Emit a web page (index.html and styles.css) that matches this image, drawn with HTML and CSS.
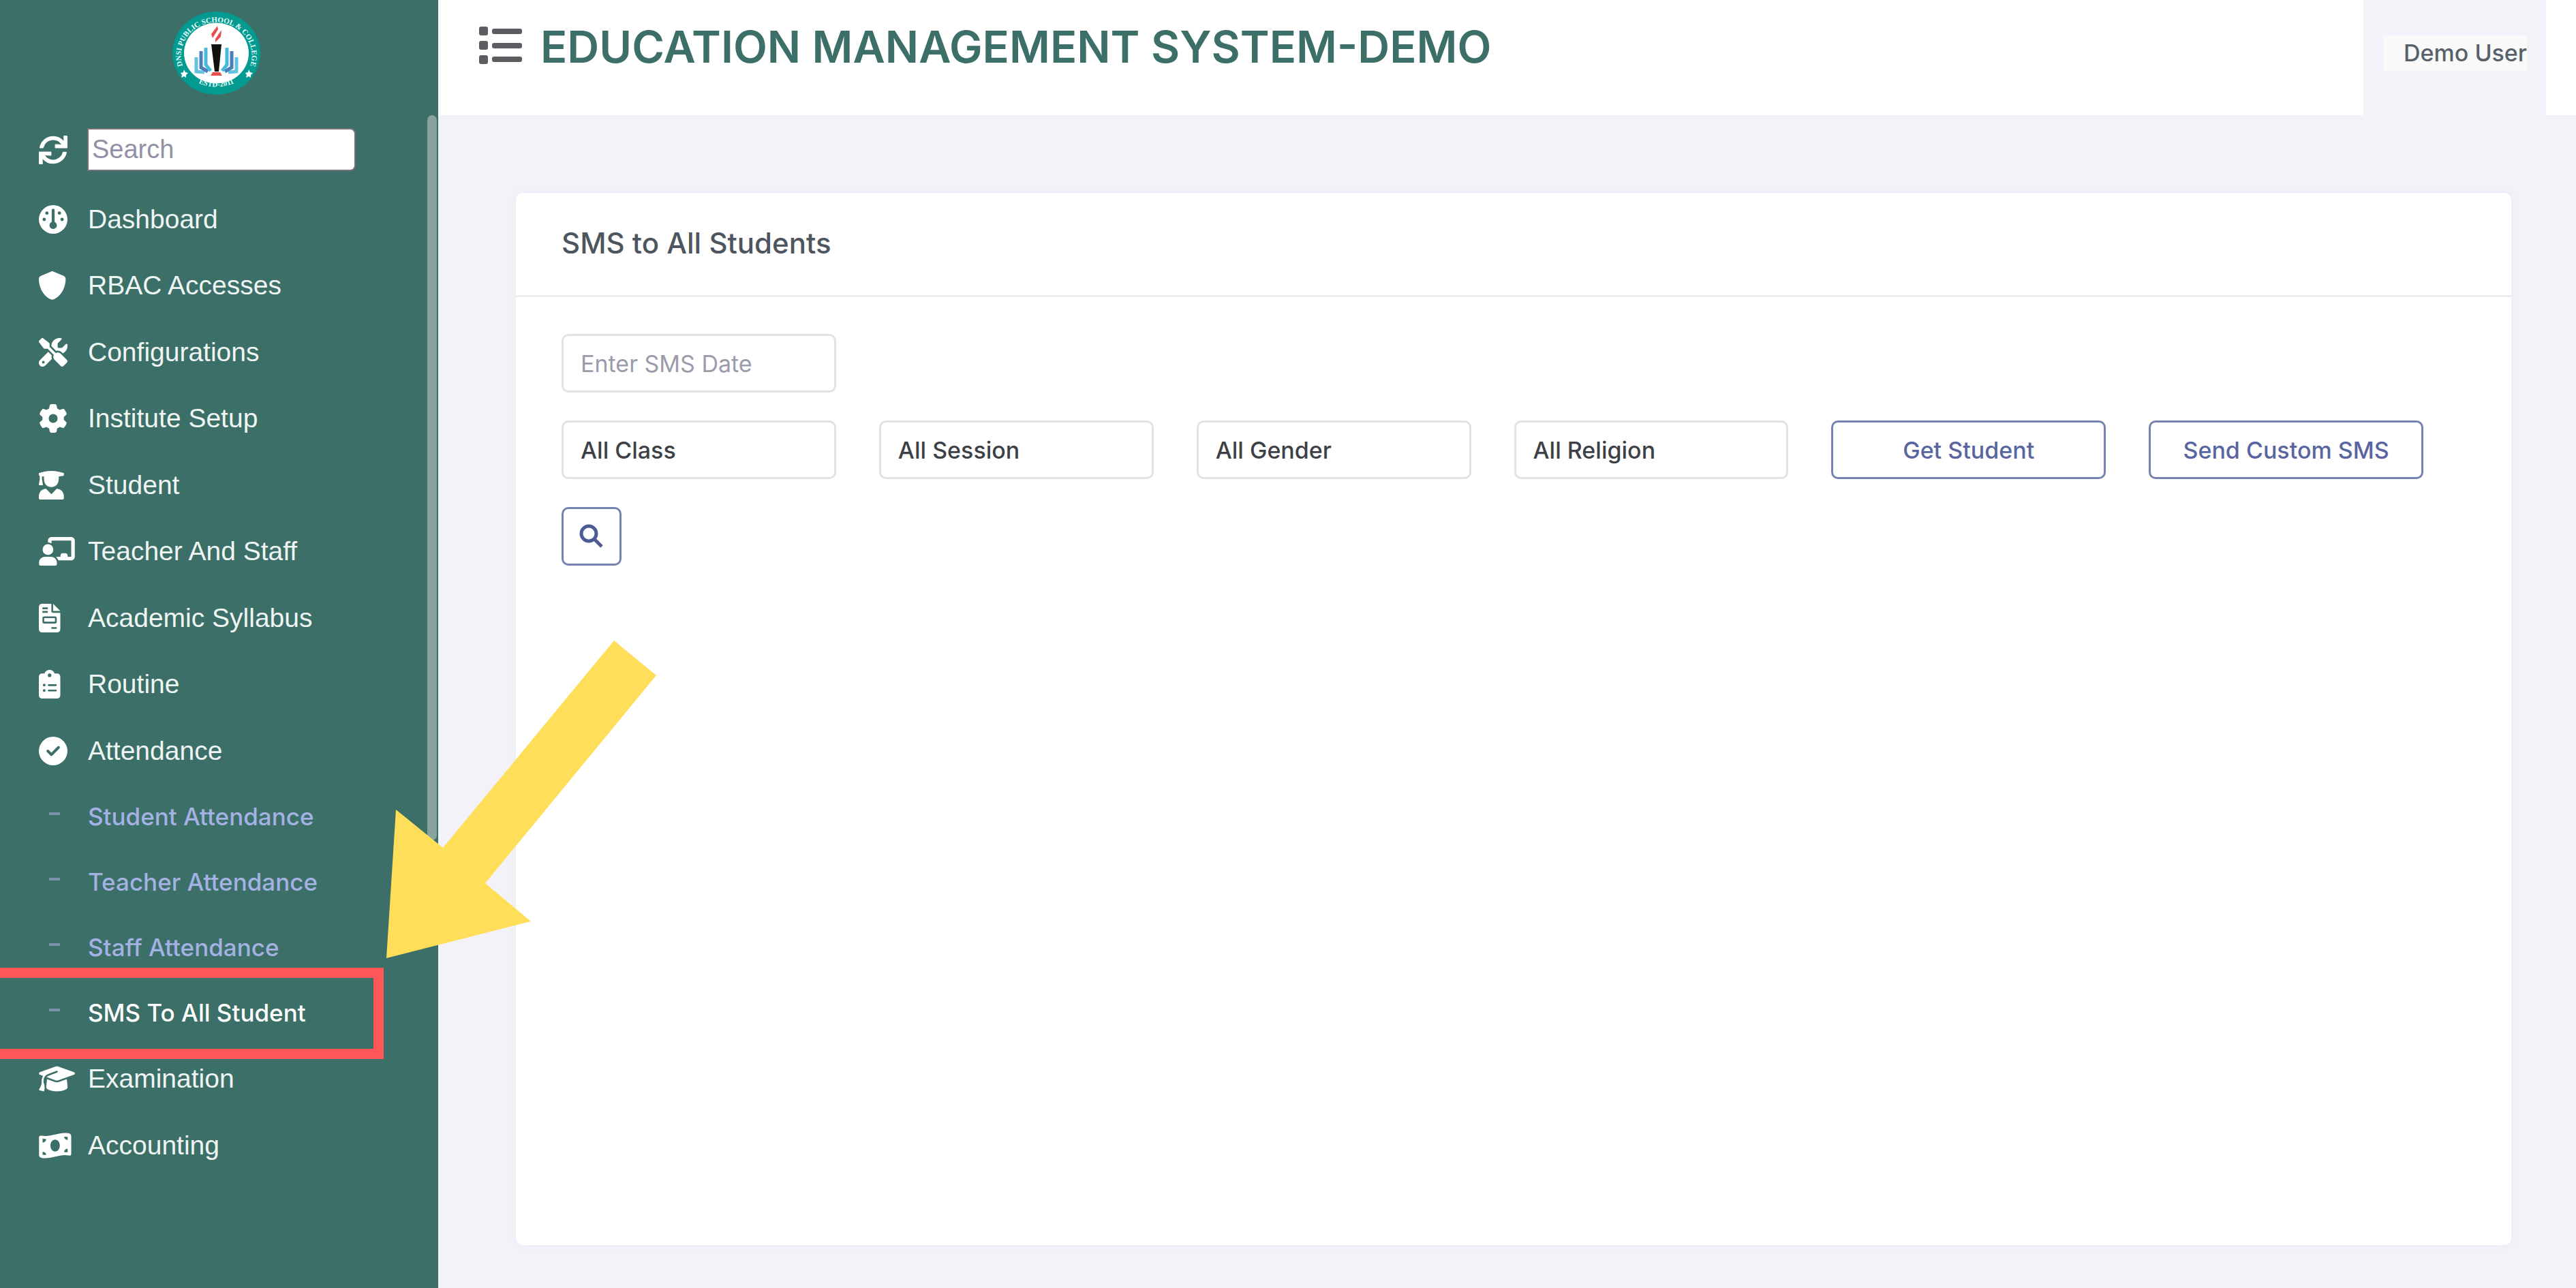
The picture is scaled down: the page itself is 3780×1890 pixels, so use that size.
FILE: index.html
```html
<!DOCTYPE html>
<html lang="en">
<head>
<meta charset="utf-8">
<title>SMS to All Students</title>
<link rel="stylesheet" href="styles.css">
</head>
<body>
<div class="layout">
  <aside class="sidebar">
    <div class="brand">
      <svg class="logo" viewBox="0 0 129 122" aria-label="School logo">
        <ellipse cx="64.500" cy="61" rx="64.500" ry="61" fill="#039a91"/>
        <ellipse cx="64.500" cy="61" rx="47.500" ry="44.500" fill="#fff"/>
        <path id="ring-top" d="M14.500 78A52 49 0 1 1 114.500 78" fill="none"/>
        <path id="ring-bottom" d="M20 92A60 56 0 0 0 109 92" fill="none"/>
        <text class="ring-text"><textPath href="#ring-top" startOffset="50%" text-anchor="middle">DNSI PUBLIC SCHOOL &amp; COLLEGE</textPath></text>
        <text class="ring-text"><textPath href="#ring-bottom" startOffset="50%" text-anchor="middle">ESTD-2011</textPath></text>
        <path d="M17 85l2 4 4 1-3 3v4l-3-2-4 2 1-4-2-3 4-1zM112 85l2 4 4 1-3 3v4l-3-2-4 2 1-4-2-3 4-1z" fill="#fff"/>
        <path d="M66 21L57 33l2 6 8-13zM72 27l-9 13v5l8-8z" fill="#ec4f4b"/>
        <path d="M57 48h15l-4 40h-6z" fill="#111"/>
        <path d="M59 89h11l3 5H56z" fill="#ec4f4b"/>
        <g fill="none" stroke-width="5">
          <path d="M35 67v21l12 1M94 67v21l-12 1" stroke="#62c4e0"/>
          <path d="M42 58v24l10 6M87 58v24l-10 6" stroke="#4c7fb8"/>
          <path d="M49 53v25l7 9M80 53v25l-7 9" stroke="#46b9dc"/>
        </g>
      </svg>
    </div>
    <div class="side-search">
      <button class="refresh" type="button" aria-label="Refresh">
        <svg class="icon" viewBox="0 0 512 512"><path d="M440.650 12.570l4 82.770A247.160 247.160 0 0 0 255.830 8C134.730 8 33.910 94.920 12.290 209.820A12 12 0 0 0 24.090 224h49.050a12 12 0 0 0 11.670-9.260 175.910 175.910 0 0 1 317-56.940l-101.460-4.860a12 12 0 0 0-12.570 12v47.410a12 12 0 0 0 12 12H500a12 12 0 0 0 12-12V12a12 12 0 0 0-12-12h-47.370a12 12 0 0 0-11.980 12.570zM255.830 432a175.610 175.610 0 0 1-146-77.800l101.800 4.870a12 12 0 0 0 12.570-12v-47.400a12 12 0 0 0-12-12H12a12 12 0 0 0-12 12V500a12 12 0 0 0 12 12h47.350a12 12 0 0 0 12-12.600l-4.150-82.570A247.170 247.170 0 0 0 255.830 504c121.110 0 221.930-86.920 243.550-201.820a12 12 0 0 0-11.800-14.180h-49.050a12 12 0 0 0-11.670 9.260A175.860 175.860 0 0 1 255.830 432z"/></svg>
      </button>
      <input class="search-input" type="text" placeholder="Search" aria-label="Search menu">
    </div>
    <nav>
      <ul class="menu">
        <li><a href="#"><svg class="icon" viewBox="0 0 512 512"><path fill-rule="evenodd" d="M256 0a256 256 0 1 0 0 512a256 256 0 1 0 0-512zM230 90a26 26 0 0 1 52 0v210a66 66 0 1 1-52 0zM144 112a30 30 0 1 0 0 60a30 30 0 1 0 0-60zM368 112a30 30 0 1 0 0 60a30 30 0 1 0 0-60zM96 226a30 30 0 1 0 0 60a30 30 0 1 0 0-60zM416 226a30 30 0 1 0 0 60a30 30 0 1 0 0-60z"/></svg><span>Dashboard</span></a></li>
        <li><a href="#"><svg class="icon" viewBox="16 0 512 512"><path d="M256 0c4.600 0 9.200 1 13.400 2.900L457.700 82.800c22 9.300 38.400 31 38.300 57.200c-.5 99.200-41.300 280.700-213.600 363.200c-16.700 8-36.100 8-52.800 0C57.300 420.700 16.500 239.200 16 140c-.1-26.200 16.300-47.900 38.300-57.200L242.700 2.900C246.800 1 251.400 0 256 0z"/></svg><span>RBAC Accesses</span></a></li>
        <li><a href="#"><svg class="icon" viewBox="0 0 512 512"><path fill-rule="evenodd" d="M78.600 5C69.100-2.400 55.600-1.500 47 7L7 47c-8.500 8.500-9.400 22-2.100 31.600l80 104c4.500 5.900 11.600 9.400 19 9.400h54.100l109 109c-14.700 29-10 65.400 14.300 89.600l112 112c12.500 12.500 32.800 12.500 45.300 0l64-64c12.500-12.500 12.500-32.800 0-45.300l-112-112c-24.200-24.200-60.600-29-89.600-14.300l-109-109V104c0-7.500-3.500-14.500-9.400-19L78.600 5zM19.900 396.100C7.200 408.800 0 426.100 0 444.100C0 481.600 30.400 512 67.900 512c18 0 35.300-7.200 48-19.900L233.700 374.300c-7.800-20.900-9-43.600-3.600-65.100l-61.700-61.700L19.900 396.100zM512 144c0-10.500-1.100-20.700-3.200-30.500c-2.400-11.200-16.100-14.100-24.200-6l-63.900 63.900c-3 3-7.100 4.700-11.300 4.700H352c-8.800 0-16-7.200-16-16V102.600c0-4.200 1.700-8.300 4.700-11.300l63.900-63.900c8.100-8.100 5.200-21.800-6-24.200C388.700 1.100 378.500 0 368 0C288.500 0 224 64.500 224 144l0 .8 85.300 85.300c36-9.100 75.800 .5 104 28.700L429 274.500c49-23 83-72.800 83-130.500zM56 432a24 24 0 1 1 48 0 24 24 0 1 1-48 0z"/></svg><span>Configurations</span></a></li>
        <li><a href="#"><svg class="icon" viewBox="0 0 512 512"><path fill-rule="evenodd" d="M495.900 166.600c3.200 8.700 .5 18.400-6.400 24.600l-43.300 39.400c1.100 8.300 1.700 16.800 1.700 25.400s-.6 17.100-1.700 25.400l43.300 39.400c6.900 6.200 9.600 15.900 6.400 24.600c-4.400 11.900-9.700 23.300-15.800 34.300l-4.700 8.100c-6.600 11-14 21.400-22.100 31.200c-5.900 7.200-15.700 9.600-24.500 6.800l-55.700-17.700c-13.400 10.300-28.200 18.900-44 25.400l-12.500 57.100c-2 9.100-9 16.300-18.200 17.800c-13.800 2.300-28 3.500-42.500 3.500s-28.700-1.200-42.500-3.500c-9.200-1.500-16.200-8.700-18.200-17.800l-12.500-57.100c-15.800-6.500-30.600-15.100-44-25.400L83.100 425.900c-8.800 2.800-18.600 .3-24.500-6.800c-8.100-9.800-15.500-20.200-22.100-31.200l-4.700-8.100c-6.100-11-11.400-22.400-15.800-34.300c-3.200-8.700-.5-18.400 6.400-24.600l43.300-39.400C64.600 273.100 64 264.600 64 256s.6-17.100 1.700-25.400L22.400 191.200c-6.900-6.200-9.600-15.900-6.400-24.600c4.400-11.900 9.700-23.300 15.800-34.300l4.700-8.100c6.600-11 14-21.400 22.100-31.200c5.900-7.200 15.700-9.600 24.500-6.800l55.700 17.700c13.400-10.300 28.200-18.900 44-25.400l12.500-57.100c2-9.100 9-16.300 18.200-17.800C227.300 1.200 241.500 0 256 0s28.700 1.200 42.500 3.500c9.200 1.500 16.200 8.700 18.200 17.800l12.500 57.100c15.800 6.500 30.600 15.100 44 25.400l55.700-17.700c8.800-2.800 18.600-.3 24.500 6.800c8.100 9.800 15.500 20.200 22.100 31.200l4.700 8.100c6.100 11 11.400 22.400 15.800 34.300zM256 336a80 80 0 1 0 0-160 80 80 0 1 0 0 160z"/></svg><span>Institute Setup</span></a></li>
        <li><a href="#"><svg class="icon" viewBox="0 0 512 512"><path d="M0 40C70 14 140 2 224 0c84 2 154 14 224 40v34q0 12-12 14l-80 14v42c0 96-60 146-132 146S92 240 92 144v-42l-36-6v52l16 96q2 12-10 12H12q-14 0-12-14l16-92V88Q0 84 0 70zM114 320c14-2 22 4 30 14l80 82 80-82c8-10 16-16 30-14c66 8 114 64 114 134v34q0 24-24 24H24q-24 0-24-24v-34c0-70 48-126 114-134z"/></svg><span>Student</span></a></li>
        <li><a href="#"><svg class="icon wide" viewBox="0 0 640 512"><path d="M160 128a96 96 0 1 0 0 192a96 96 0 1 0 0-192zM106 352h110c58 0 104 48 104 106v26q0 28-28 28H28q-28 0-28-28v-26c0-58 48-106 106-106zM160 64c0-36 28-64 64-64h352c36 0 64 28 64 64v288c0 36-28 64-64 64H346c-10-24-24-46-42-64h80v-24c0-22 18-40 40-40h48c22 0 40 18 40 40v24h64V64H224v50c-18-10-40-18-64-18z"/></svg><span>Teacher And Staff</span></a></li>
        <li><a href="#"><svg class="icon" viewBox="0 0 512 512"><path fill-rule="evenodd" d="M64 0h160v128q0 32 32 32h128v288q0 64-64 64H64q-64 0-64-64V64Q0 0 64 0zM256 0l128 128H256zM64 64v32h96V64zM64 128v32h96v-32zM96 224q-32 0-32 32v64q0 32 32 32h192q32 0 32-32v-64q0-32-32-32zM96 256h192v64H96zM224 416v32h96v-32z"/></svg><span>Academic Syllabus</span></a></li>
        <li><a href="#"><svg class="icon" viewBox="0 0 512 512"><path fill-rule="evenodd" d="M192 0c42 0 78 26 90 64h38q64 0 64 64v320q0 64-64 64H64q-64 0-64-64V128q0-64 64-64h38C114 26 150 0 192 0zM192 64a32 32 0 1 0 0 64a32 32 0 1 0 0-64zM96 248a24 24 0 1 0 0 48a24 24 0 1 0 0-48zM96 344a24 24 0 1 0 0 48a24 24 0 1 0 0-48zM176 256q-16 0-16 16t16 16h128q16 0 16-16t-16-16zM176 352q-16 0-16 16t16 16h128q16 0 16-16t-16-16z"/></svg><span>Routine</span></a></li>
        <li><a href="#"><svg class="icon" viewBox="0 0 512 512"><path fill-rule="evenodd" d="M256 512A256 256 0 1 0 256 0a256 256 0 1 0 0 512zM369 209L241 337c-9.400 9.400-24.600 9.400-33.900 0l-64-64c-9.400-9.400-9.400-24.600 0-33.900s24.600-9.400 33.900 0l47 47L335 175c9.400-9.400 24.600-9.400 33.900 0s9.400 24.600 0 33.900z"/></svg><span>Attendance</span></a>
          <ul class="submenu">
            <li><a href="#">Student Attendance</a></li>
            <li><a href="#">Teacher Attendance</a></li>
            <li><a href="#">Staff Attendance</a></li>
            <li class="current"><a href="#" aria-current="page">SMS To All Student</a></li>
          </ul>
        </li>
        <li><a href="#"><svg class="icon wide" viewBox="0 0 640 512"><path d="M320 32c-8.100 0-16.100 1.400-23.700 4.100L15.800 137.400C6.300 140.900 0 149.900 0 160s6.300 19.100 15.800 22.600l57.900 20.900C57.300 229.300 48 259.800 48 291.900v28.100c0 28.400-10.800 57.700-22.300 80.800c-6.500 13-13.900 25.800-22.500 37.600C0 442.700-.9 448.300 .9 453.400s6 8.900 11.200 10.200l64 16c4.200 1.100 8.700 .3 12.400-2s6.300-6.100 7.100-10.400c8.600-42.800 4.300-81.200-2.100-108.700C90.300 344.300 86 329.800 80 316.500V291.900c0-30.200 10.200-58.700 27.900-81.500c12.900-15.500 29.600-28 49.200-35.700l157-61.700c8.200-3.200 17.500 .8 20.700 9s-.8 17.500-9 20.700l-157 61.700c-12.400 4.900-23.300 12.400-32.200 21.600l159.600 57.600c7.600 2.700 15.600 4.100 23.700 4.100s16.100-1.400 23.700-4.100L624.200 182.600c9.500-3.400 15.800-12.500 15.800-22.600s-6.300-19.100-15.800-22.600L343.700 36.100C336.100 33.400 328.100 32 320 32zM128 408c0 35.300 86 72 192 72s192-36.700 192-72L496.700 262.600 354.500 314c-11.100 4-22.800 6-34.500 6s-23.500-2-34.500-6L143.300 262.600 128 408z"/></svg><span>Examination</span></a></li>
        <li><a href="#"><svg class="icon wide" viewBox="0 0 640 512"><path fill-rule="evenodd" d="M0 112q0-40 40-32C220 110 350 10 520 34q56 8 56 52v322q0 34-40 26C370 400 240 500 56 478Q0 470 0 426zM288 150c-48 0-84 48-84 106s36 106 84 106s84-48 84-106s-36-106-84-106zM64 132v72q60-8 64-64zM448 98q10 54 64 58v-54q-30-4-64-4zM64 370v50q30 4 66 2q-6-50-66-52zM512 312q-58 6-64 64q34-4 64 0z"/></svg><span>Accounting</span></a></li>
      </ul>
    </nav>
    <div class="scroll-thumb"></div>
  </aside>

  <div class="page">
    <header class="topbar">
      <button class="toggle" type="button" aria-label="Toggle menu">
        <svg class="toggle-icon" viewBox="0 0 63 55"><g fill="#5c5d60"><rect width="13" height="13" rx="3"/><rect y="21" width="13" height="13" rx="3"/><rect y="42" width="13" height="13" rx="3"/><rect x="19" y="3" width="44" height="8" rx="3"/><rect x="19" y="24" width="44" height="8" rx="3"/><rect x="19" y="44" width="44" height="8" rx="3"/></g></svg>
      </button>
      <h1 class="title">EDUCATION MANAGEMENT SYSTEM-DEMO</h1>
      <div class="user"><a class="user-name" href="#">Demo User</a></div>
    </header>
    <main class="content">
      <section class="card">
        <h2 class="card-title">SMS to All Students</h2>
        <form class="filters">
          <input class="control first" type="text" placeholder="Enter SMS Date" aria-label="SMS date">
          <select class="control" aria-label="Class"><option>All Class</option></select>
          <select class="control" aria-label="Session"><option>All Session</option></select>
          <select class="control" aria-label="Gender"><option>All Gender</option></select>
          <select class="control" aria-label="Religion"><option>All Religion</option></select>
          <button class="control action" type="button">Get Student</button>
          <button class="control action" type="button">Send Custom SMS</button>
          <button class="control action find" type="button" aria-label="Search">
            <svg class="find-icon" viewBox="0 0 36 36" fill="none" stroke="currentColor" stroke-width="5"><circle cx="14" cy="14" r="11"/><path d="M22 22l11 11"/></svg>
          </button>
        </form>
      </section>
    </main>
  </div>

  <svg class="pointer" viewBox="0 0 396 466" aria-hidden="true"><path d="M334 0L396 51 145 356 212 412 0 466 14 248 83 304z" fill="#ffde59"/></svg>
</div>
</body>
</html>
```
FILE: styles.css
```css
* { box-sizing: border-box; }
body {
  margin: 0;
  background: #f3f2f9;
  font-family: Inter, "Open Sans", sans-serif;
  font-weight: 500;
}
ul { margin: 0; padding: 0; list-style: none; }
a { color: inherit; text-decoration: none; }
button { cursor: pointer; }

.layout { position: relative; display: flex; min-height: 100vh; }

/* Sidebar */
.sidebar {
  position: relative;
  flex: none;
  width: 643px;
  background: #3c6f67;
  color: #fff;
  font-family: "Liberation Sans", Arial, sans-serif;
  font-weight: 400;
}
.brand { display: flex; justify-content: center; height: 169px; padding: 17px 8px 0 0; }
.logo { width: 129px; height: 122px; }
.ring-text { fill: #e6fffb; font: 700 11px "Liberation Serif", serif; }
.side-search { display: flex; align-items: center; padding: 19px 0 22px 57px; }
.refresh { display: flex; width: 71px; padding: 0; border: 0; background: none; }
.search-input {
  width: 394px;
  height: 63px;
  padding: 0 5px;
  border: 2px solid #777078;
  border-radius: 0 8px 8px 0;
  background: #fff;
  font: 38px "Liberation Sans", Arial, sans-serif;
}
.search-input::placeholder { color: #9290a6; opacity: 1; }
.icon { width: 42px; height: 42px; fill: #fff; }
.icon.wide { width: 53px; }
.menu > li > a {
  display: grid;
  grid-template-columns: 72px 1fr;
  align-items: center;
  height: 97px;
  padding-left: 57px;
  color: #eef5f3;
  font-size: 39px;
}
.menu > li:nth-child(even) > a { height: 98px; }
.submenu {
  color: #a3b1e3;
  font-family: Inter, "Open Sans", sans-serif;
  font-size: 35px;
  font-weight: 500;
}
.submenu li { position: relative; }
.submenu a { display: flex; align-items: center; height: 96px; padding-left: 72px; }
.submenu a::before {
  content: "";
  width: 16px;
  height: 4px;
  margin: 0 41px 8px 0;
  background: #7b92ae;
}
.submenu .current { color: #fff; }
.submenu .current::after {
  content: "";
  position: absolute;
  inset: -18px 80px -20px 0;
  border: 15px solid #ff5757;
  border-left: 0;
  pointer-events: none;
}
.scroll-thumb {
  position: absolute;
  top: 169px;
  right: 2px;
  width: 14px;
  height: 1064px;
  border-radius: 7px;
  background: #88a39c;
}

/* Top bar */
.page { display: flex; flex: 1; flex-direction: column; min-width: 0; }
.topbar { display: flex; height: 169px; padding: 0 44px 0 60px; background: #fff; }
.toggle { align-self: flex-start; margin-top: 39px; padding: 0; border: 0; background: none; }
.toggle-icon { display: block; width: 63px; height: 55px; }
.title {
  margin: 29px 0 0 27px;
  color: #3c6f67;
  font-size: 65px;
  font-weight: 600;
  line-height: 80px;
  white-space: nowrap;
}
.user { margin-left: auto; padding: 52px 28px 0 29px; background: #f3f2f9; }
.user-name {
  display: block;
  padding-left: 30px;
  background: #f9f9f9;
  color: #58616a;
  font-size: 34px;
  line-height: 52px;
}

/* Card */
.content { display: flex; flex: 1; padding: 114px 95px 63px 114px; }
.card { flex: 1; border-radius: 10px; background: #fff; box-shadow: 0 0 8px #e9e8f1; }
.card-title {
  margin: 0;
  padding: 44px 67px 46px;
  border-bottom: 3px solid #ebeeee;
  color: #4d555e;
  font-size: 42px;
  font-weight: 500;
  line-height: 60px;
}
.filters {
  display: grid;
  grid-template-columns: repeat(6, 1fr);
  gap: 41px 63px;
  padding: 54px 129px 54px 67px;
}
.control {
  width: 100%;
  height: 86px;
  padding: 0 25px;
  border: 3px solid #dfe3e7;
  border-radius: 10px;
  appearance: none;
  background: #fff;
  color: #3d4146;
  font: 500 34px Inter, "Open Sans", sans-serif;
}
.control::placeholder { color: #9b9bab; font-weight: 400; opacity: 1; }
.first { grid-column: 1; }
.first + .control { grid-column: 1; }
.action { border-color: #7682b0; color: #5865a0; }
.find { display: flex; align-items: center; justify-content: center; width: 88px; padding: 0; }
.find-icon { width: 36px; height: 36px; color: #4c5a97; }

/* Callout arrow over the page */
.pointer { position: absolute; left: 567px; top: 940px; width: 396px; height: 466px; }
```
